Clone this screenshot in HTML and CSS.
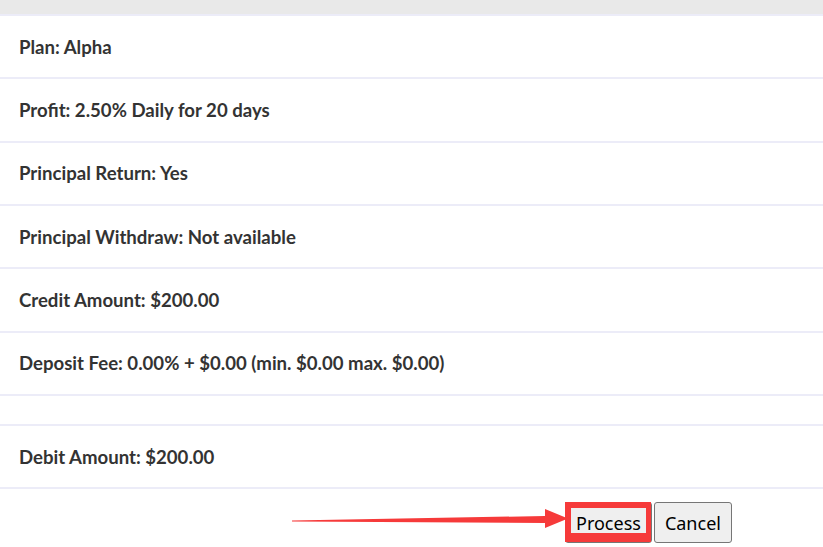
FILE: index.html
```html
<!DOCTYPE html>
<html>
<head>
<meta charset="utf-8">
<link rel="stylesheet" href="styles.css">
</head>
<body>
<div class="topbar"></div>
<div class="details">
  <div class="row">Plan: Alpha</div>
  <div class="row">Profit: 2.50% Daily for 20 days</div>
  <div class="row">Principal Return: Yes</div>
  <div class="row">Principal Withdraw: Not available</div>
  <div class="row">Credit Amount: $200.00</div>
  <div class="row">Deposit Fee: 0.00% + $0.00 (min. $0.00 max. $0.00)</div>
  <div class="row empty"></div>
  <div class="row">Debit Amount: $200.00</div>
</div>
<div class="actions">
  <svg class="arrow" width="280" height="24" viewBox="0 0 280 24">
    <polygon points="0,11.5 253,7 253,0 276,9.5 253,19 253,14 0,12.5" fill="#f63a3a"/>
  </svg>
  <div class="highlight">
    <button class="btn">Process</button>
    <span class="mark"></span>
  </div>
  <button class="btn">Cancel</button>
</div>
</body>
</html>
```
FILE: styles.css
```css
html, body {
  margin: 0;
  padding: 0;
  background: #ffffff;
}
body {
  width: 823px;
  height: 547px;
  overflow: hidden;
  font-family: "Lato", "Liberation Sans", sans-serif;
}
.topbar {
  height: 14px;
  background: #e9e9e9;
  border-bottom: 2px solid #ececf8;
}
.details {
  display: flex;
  flex-direction: column;
}
.row {
  padding: 18.66px 19px;
  line-height: 24px;
  font-size: 18.6px;
  font-weight: 700;
  color: #333333;
  border-bottom: 2px solid #ececf8;
}
.row.empty {
  height: 28px;
  padding: 0;
}
.actions {
  display: flex;
  align-items: flex-start;
  padding: 13px 0 0 292px;
  gap: 2px;
}
.arrow {
  margin-top: 7px;
  margin-right: -9px;
  flex: none;
}
.highlight {
  position: relative;
}
.btn {
  height: 41px;
  padding: 0 10px;
  font-family: "Noto Sans", "Open Sans", sans-serif;
  font-size: 18px;
  color: #000;
  background: #efefef;
  border: 1px solid #767676;
  border-radius: 3px;
}
.mark {
  position: absolute;
  left: 0;
  top: 0;
  right: 1px;
  bottom: 1px;
  border-style: solid;
  border-color: #f63a3a;
  border-width: 6px 5px 9px 6px;
  pointer-events: none;
}
```
